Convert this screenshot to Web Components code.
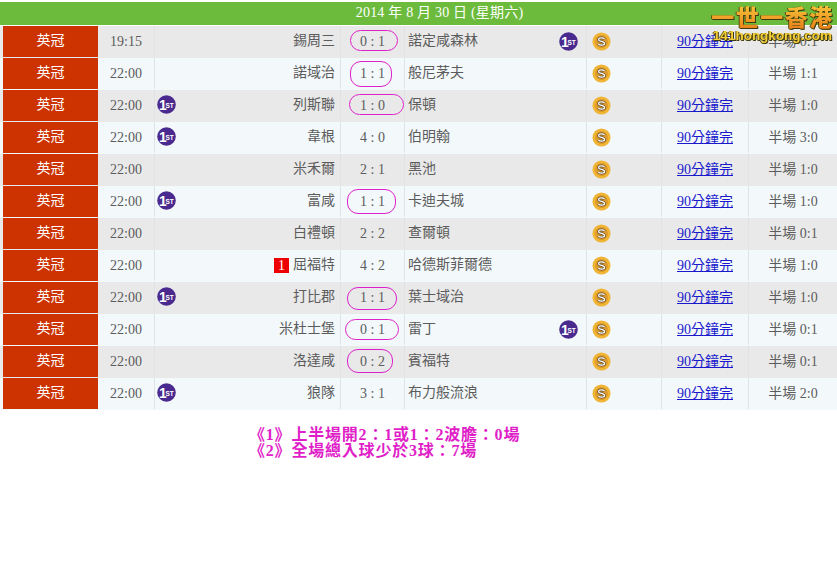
<!DOCTYPE html>
<html lang="zh-Hant">
<head>
<meta charset="utf-8">
<title>英冠賽果</title>
<style>
  html, body { margin: 0; background: #fff; }
  body { font-family: "Liberation Serif", "Noto Sans CJK TC", serif; overflow: hidden; height: 562px; position: relative; }
</style>
</head>
<body>
<match-board></match-board>
<result-notes>
  <div>《1》上半場開2：1或1：2波膽：0場</div>
  <div>《2》全場總入球少於3球：7場</div>
</result-notes>
<site-logo></site-logo>

<script>
"use strict";

const MATCHES = [
  { time: "19:15", home: "錫周三", score: "0 : 1", away: "諾定咸森林", half: "半場 0:1", awayFirst: true, ring: [9, 4, 48, 21] },
  { time: "22:00", home: "諾域治", score: "1 : 1", away: "般尼茅夫", half: "半場 1:1", ring: [9, 3, 42, 26] },
  { time: "22:00", home: "列斯聯", score: "1 : 0", away: "保頓", half: "半場 1:0", homeFirst: true, ring: [8, 4, 55, 21] },
  { time: "22:00", home: "韋根", score: "4 : 0", away: "伯明翰", half: "半場 3:0", homeFirst: true },
  { time: "22:00", home: "米禾爾", score: "2 : 1", away: "黑池", half: "半場 1:0" },
  { time: "22:00", home: "富咸", score: "1 : 1", away: "卡迪夫城", half: "半場 1:0", homeFirst: true, ring: [6, 3, 49, 25] },
  { time: "22:00", home: "白禮頓", score: "2 : 2", away: "查爾頓", half: "半場 0:1" },
  { time: "22:00", home: "屈福特", score: "4 : 2", away: "哈德斯菲爾德", half: "半場 1:0", card: "1" },
  { time: "22:00", home: "打比郡", score: "1 : 1", away: "葉士域治", half: "半場 1:0", homeFirst: true, ring: [6, 5, 50, 23] },
  { time: "22:00", home: "米杜士堡", score: "0 : 1", away: "雷丁", half: "半場 0:1", awayFirst: true, ring: [4, 5, 54, 21] },
  { time: "22:00", home: "洛達咸", score: "0 : 2", away: "賓福特", half: "半場 0:1", ring: [6, 3, 46, 24] },
  { time: "22:00", home: "狼隊", score: "3 : 1", away: "布力般流浪", half: "半場 2:0", homeFirst: true },
];

class FirstIcon extends HTMLElement {
  constructor() {
    super();
    this.attachShadow({ mode: "open" }).innerHTML = `
      <style>:host { display: block; width: 19px; height: 19px; } svg { display: block; }</style>
      <svg width="19" height="19" viewBox="0 0 19 19">
        <circle cx="9.5" cy="9.5" r="9.3" fill="#4a2a8e"/>
        <text x="2" y="14.500" font-family="Liberation Sans" font-weight="700" font-size="14" fill="#fff">1</text>
        <text x="8.500" y="12.500" font-family="Liberation Sans" font-weight="700" font-size="6.500" fill="#fff">ST</text>
      </svg>`;
  }
}
customElements.define("first-icon", FirstIcon);

class CoinIcon extends HTMLElement {
  constructor() {
    super();
    this.attachShadow({ mode: "open" }).innerHTML = `
      <style>:host { display: block; width: 19px; height: 19px; } svg { display: block; }</style>
      <svg width="19" height="19" viewBox="0 0 20 20">
        <circle cx="10" cy="10" r="9.500" fill="#f0b534"/>
        <circle cx="10" cy="10" r="6.800" fill="#dd9a2c"/>
        <path d="M13.200 7.400C12.300 5.800 7.200 5.600 7 7.900 6.800 10.300 13.200 9.600 13.200 12.100 13.200 14.300 7.900 14.400 6.700 12.500" fill="none" stroke="#5d4c28" stroke-width="2.800"/>
        <path d="M13.200 7.400C12.300 5.800 7.200 5.600 7 7.900 6.800 10.300 13.200 9.600 13.200 12.100 13.200 14.300 7.900 14.400 6.700 12.500" fill="none" stroke="#fff" stroke-width="1.300"/>
      </svg>`;
  }
}
customElements.define("coin-icon", CoinIcon);

class MatchRow extends HTMLElement {
  constructor() {
    super();
    this.attachShadow({ mode: "open" }).innerHTML = `
      <style>
        :host {
          display: grid;
          grid-template-columns: 95px 56px 186px 64px 182px 75px 87px 1fr;
          height: 32px;
          margin-left: 3px;
          font-size: 14px;
          color: #5c5c5c;
          background: var(--row-bg, #fff);
          box-shadow: -3px 0 0 var(--row-bg, #fff);
        }
        .cell {
          display: flex;
          align-items: center;
          box-sizing: border-box;
          height: 31px;
          border-left: 1px solid #dfe3e6;
          position: relative;
          min-width: 0;
        }
        .league { background: #cc3300; color: #fff; justify-content: center; border: 0; padding-bottom: 6px; }
        .time { justify-content: center; border: 0; }
        .home { justify-content: flex-end; padding: 0 5px 5px 3px; gap: 4px; }
        .away { padding: 0 8px 5px 3px; justify-content: space-between; }
        .score { justify-content: center; }
        .odds { justify-content: flex-start; padding: 0 0 1px 5px; }
        .link { justify-content: center; padding-bottom: 4px; }
        .link a { color: #1a1acc; text-decoration: underline; }
        .half { justify-content: center; padding-bottom: 4px; }
        .home first-icon { position: absolute; left: 2px; top: 5px; }
        .away first-icon { margin-top: 5px; }
        .card { background: #ee0000; color: #fff; width: 15px; height: 15px; line-height: 15px; text-align: center; margin-top: 5px; }
        .ring { position: absolute; box-sizing: border-box; border: 1px solid #dd22cc; border-radius: 11px; }
      </style>
      <div class="cell league">英冠</div>
      <div class="cell time" id="time"></div>
      <div class="cell home" id="home"></div>
      <div class="cell score" id="score"></div>
      <div class="cell away" id="away"></div>
      <div class="cell odds"><coin-icon></coin-icon></div>
      <div class="cell link"><a href="#">90分鐘完</a></div>
      <div class="cell half" id="half"></div>`;
  }

  set match(m) {
    const root = this.shadowRoot;
    root.getElementById("time").textContent = m.time;
    root.getElementById("half").textContent = m.half;

    const home = root.getElementById("home");
    if (m.homeFirst) home.appendChild(document.createElement("first-icon"));
    if (m.card) {
      const card = document.createElement("span");
      card.className = "card";
      card.textContent = m.card;
      home.appendChild(card);
    }
    home.appendChild(document.createTextNode(m.home));

    const score = root.getElementById("score");
    score.textContent = m.score;
    if (m.ring) {
      // hand-drawn circles around the score, every one a bit different
      const ring = document.createElement("span");
      ring.className = "ring";
      ring.style.cssText = `left:${m.ring[0]}px;top:${m.ring[1]}px;width:${m.ring[2]}px;height:${m.ring[3]}px`;
      score.appendChild(ring);
    }

    const away = root.getElementById("away");
    const name = document.createElement("span");
    name.textContent = m.away;
    away.appendChild(name);
    if (m.awayFirst) away.appendChild(document.createElement("first-icon"));
  }
}
customElements.define("match-row", MatchRow);

class MatchBoard extends HTMLElement {
  constructor() {
    super();
    this.attachShadow({ mode: "open" }).innerHTML = `
      <style>
        :host { display: block; padding-top: 2px; }
        .title {
          height: 23px;
          line-height: 21px;
          margin-bottom: 1px;
          background: #6cbb3c;
          color: #fff;
          font-size: 14px;
          letter-spacing: .2px;
          text-align: center;
          padding-left: 42px;
        }
      </style>
      <div class="title">2014 年 8 月 30 日 (星期六)</div>
      <div id="rows"></div>`;
  }

  connectedCallback() {
    const rows = this.shadowRoot.getElementById("rows");
    MATCHES.forEach((m, i) => {
      const row = document.createElement("match-row");
      row.style.setProperty("--row-bg", i % 2 ? "#f3f8fb" : "#e9e9e9");
      row.match = m;
      rows.appendChild(row);
    });
  }
}
customElements.define("match-board", MatchBoard);

class ResultNotes extends HTMLElement {
  constructor() {
    super();
    this.attachShadow({ mode: "open" }).innerHTML = `
      <style>
        :host {
          display: block;
          margin: 17px 0 0 249px;
          color: #e01fc8;
          font-size: 16px;
          font-weight: 700;
          letter-spacing: .8px;
          line-height: 16px;
        }
      </style>
      <slot></slot>`;
  }
}
customElements.define("result-notes", ResultNotes);

class SiteLogo extends HTMLElement {
  constructor() {
    super();
    this.attachShadow({ mode: "open" }).innerHTML = `
      <style>
        :host {
          position: absolute;
          left: 709px;
          top: 4px;
          width: 127px;
          text-align: center;
          font-family: "Noto Sans CJK TC", "Liberation Sans", sans-serif;
          font-weight: 900;
          filter: drop-shadow(1px 1px 0 #3d3a10) drop-shadow(-1px 0 0 #57500f);
        }
        .name {
          font-size: 23px;
          line-height: 25px;
          letter-spacing: 1.500px;
          white-space: nowrap;
          background: linear-gradient(#f8c83a, #e8801a);
          -webkit-background-clip: text;
          background-clip: text;
          color: transparent;
        }
        .url { font-family: "Liberation Sans", sans-serif; font-size: 13.500px; font-weight: 700; line-height: 14px; white-space: nowrap; color: #f6cf38; }
      </style>
      <div class="name">一世一香港</div>
      <div class="url">141hongkong.com</div>`;
  }
}
customElements.define("site-logo", SiteLogo);
</script>
</body>
</html>
